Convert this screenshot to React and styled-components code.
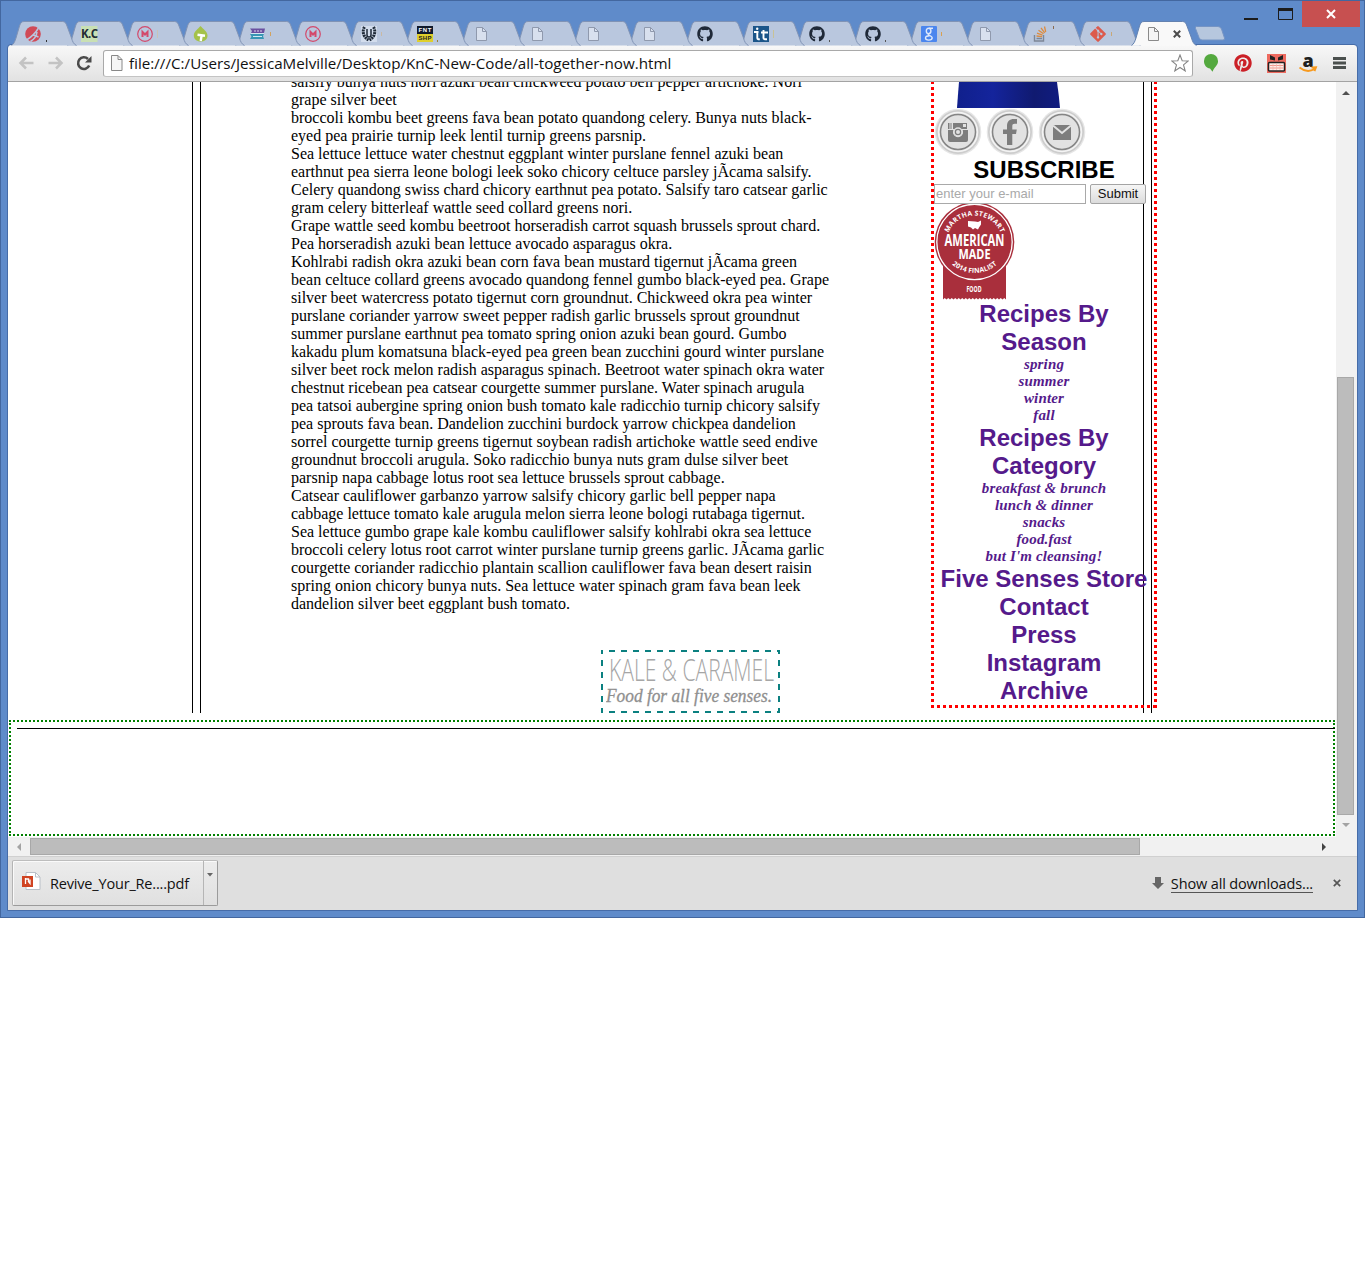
import React from "react";
import styled, { createGlobalStyle } from "styled-components";
import { FaGithub, FaPinterest, FaGitAlt } from "react-icons/fa";

const Global = createGlobalStyle`
  * { box-sizing: border-box; }
  body { margin: 0; background: #fff; }
`;

const ui = '"Open Sans", "Noto Sans", sans-serif';
const serif = '"Liberation Serif", "Times New Roman", serif';
const sans = '"Liberation Sans", Arial, sans-serif';

const Window = styled.div`
  width: 1365px;
  height: 918px;
  display: flex;
  flex-direction: column;
  background: #5f8bca;
  border: 1px solid #43679f;
  padding: 0 7px 7px;
  overflow: hidden;
`;

const TitleBar = styled.header`
  height: 44px;
  flex: none;
  display: flex;
  justify-content: space-between;
  align-items: flex-start;
`;

const TabStrip = styled.nav`
  display: flex;
  padding: 20px 0 0 3px;
  isolation: isolate;
`;

const TabBox = styled.div`
  position: relative;
  width: 68px;
  height: 25px;
  margin-right: -12px;
  flex: none;
  z-index: ${(p) => p.$z};
`;

const TabShape = styled.svg`
  position: absolute;
  inset: 0;
`;

const TabContent = styled.div`
  position: relative;
  display: flex;
  align-items: center;
  height: 16px;
  margin: 5px 0 0 14px;
  gap: ${(p) => p.$gap || 4}px;
`;

const Dot = styled.i`
  width: 1px;
  height: ${(p) => p.$h}px;
  background: ${(p) => p.$c};
  align-self: ${(p) => p.$align};
`;

const NewTab = styled.svg`
  margin: 4px 0 0 -5px;
`;

const WindowButtons = styled.div`
  display: flex;
  height: 27px;
  margin-right: -3px;
`;

const WindowButton = styled.div`
  width: ${(p) => p.$w}px;
  height: 26px;
  background: ${(p) => p.$bg || "transparent"};
  display: flex;
  align-items: center;
  justify-content: center;
`;

const Frame = styled.div`
  flex: 1;
  display: flex;
  flex-direction: column;
  background: #fff;
  border-radius: 3px 3px 0 0;
  outline: 1px solid #466ca8;
  min-height: 0;
  overflow: hidden;
`;

const Toolbar = styled.div`
  height: 37px;
  flex: none;
  display: flex;
  align-items: center;
  background: linear-gradient(#f8f8f8, #e2e2e2);
  border-bottom: 1px solid #a3a3a3;
  padding: 0 10px;
`;

const NavButtons = styled.div`
  display: flex;
  gap: 12px;
  width: 85px;
`;

const Omnibox = styled.div`
  width: 1090px;
  height: 27px;
  display: flex;
  align-items: center;
  border: 1px solid #a9a9a9;
  border-bottom-color: #c4c4c4;
  border-radius: 3px;
  background: #fff;
  padding: 0 3px 0 7px;
`;

const Url = styled.span`
  flex: 1;
  margin-left: 6px;
  font: 15.2px/20px ${ui};
  color: #111;
  white-space: nowrap;
`;

const Extensions = styled.div`
  flex: 1;
  display: flex;
  align-items: center;
  justify-content: space-between;
  padding-left: 9px;
`;

const AmazonIcon = styled.svg`
  margin: 0 2px 0 -2px;
  overflow: visible;
`;

const Body = styled.div`
  display: flex;
  height: 755px;
  flex: none;
`;

const Viewport = styled.main`
  width: 1328px;
  height: 755px;
  padding-left: 1px;
  overflow: hidden;
  background: #fff;
`;

const VScroll = styled.div`
  width: 21px;
  height: 755px;
  background: #f1f1f1;
  display: flex;
  flex-direction: column;
  align-items: center;
  padding: 7px 2px 0 0;
`;

const VThumb = styled.div`
  width: 17px;
  height: 438px;
  margin: 280px 0 6px;
  background: #bcbcbc;
  border: 1px solid #a8a8a8;
`;

const HScroll = styled.div`
  height: 19px;
  flex: none;
  background: #f1f1f1;
  display: flex;
  align-items: center;
  padding: 0 30px 0 7px;
`;

const HThumb = styled.div`
  width: 1110px;
  height: 17px;
  margin: 0 auto 0 7px;
  background: #bcbcbc;
  border: 1px solid #a8a8a8;
`;

const OuterRule = styled.div`
  width: 960px;
  height: 631px;
  margin-left: 183px;
  padding: 0 7px;
  border: solid #000;
  border-width: 0 1px;
`;

const InnerRule = styled.div`
  height: 631px;
  padding-left: 90px;
  display: flex;
  align-items: flex-start;
  border: solid #000;
  border-width: 0 1px;
`;

const Column = styled.div`
  width: 640px;
  flex: none;
  margin-top: -9px;
  display: flex;
  flex-direction: column;
`;

const Article = styled.article`
  font: 16px/18px ${serif};
  color: #000;
`;

const Line = styled.div`
  white-space: nowrap;
  height: 18px;
`;

const Logo = styled.div`
  width: 179px;
  height: 63px;
  margin: 37px 0 0 310px;
  border: 2px solid transparent;
  padding: 3px 0 0 3px;
  --across: linear-gradient(90deg, #0b8080 50%, transparent 50%);
  --down: linear-gradient(#0b8080 50%, transparent 50%);
  background:
    var(--across) 8px 0 / 12px 2px repeat-x border-box,
    var(--across) 8px 100% / 12px 2px repeat-x border-box,
    var(--down) 0 10px / 2px 12px repeat-y border-box,
    var(--down) 100% 10px / 2px 12px repeat-y border-box;
`;

const Sidebar = styled.aside`
  width: 226px;
  height: 633px;
  flex: none;
  margin-top: -7px;
  padding: 3px;
  --down: linear-gradient(#f00 50%, transparent 50%);
  background:
    var(--down) 0 0 / 3px 6px repeat-y,
    var(--down) 100% 0 / 3px 6px repeat-y,
    linear-gradient(90deg, #f00 50%, transparent 50%) 0 100% / 6px 3px repeat-x;
  display: flex;
  flex-direction: column;
`;

const Portrait = styled.svg`
  display: block;
  margin: 4px 0 0 22px;
  flex: none;
`;

const SocialRow = styled.div`
  height: 48px;
  flex: none;
  display: flex;
  gap: 4px;
`;

const Heading = styled.h2`
  margin: 0;
  font: bold 24px/28px ${sans};
  color: ${(p) => p.$color || "#551a8b"};
  text-align: center;
  white-space: nowrap;
`;

const SubLink = styled.div`
  font: italic bold 15px/17px ${serif};
  letter-spacing: 0.15px;
  color: #551a8b;
  text-align: center;
`;

const Form = styled.form`
  display: flex;
  gap: 4px;
  height: 20px;
  flex: none;
`;

const Email = styled.input`
  width: 152px;
  height: 20px;
  border: 1px solid #a9a9a9;
  border-radius: 0;
  padding: 0 1px 2px;
  font: 13px ${sans};
  background: #fff;
  &::placeholder { color: #a9a9a9; opacity: 1; }
`;

const Submit = styled.button`
  width: 56px;
  height: 20px;
  flex: none;
  padding: 0 0 2px;
  border: 1px solid #a4a4a4;
  border-radius: 2px;
  background: linear-gradient(#f6f6f6, #dcdcdc);
  font: 13px ${sans};
  color: #111;
`;

const Badge = styled.svg`
  display: block;
  height: 96px;
  flex: none;
`;

const Footer = styled.footer`
  width: 1326px;
  height: 116px;
  margin-top: 7px;
  padding: 6px 0 0 6px;
  border: 2px dotted #008000;
`;

const FooterRule = styled.div`
  width: 1318px;
  height: 1px;
  background: #000;
`;

const Shelf = styled.div`
  flex: 1;
  display: flex;
  justify-content: space-between;
  background: #dfdfdf;
  border-top: 1px solid #d0d0d0;
  padding: 3px 16px 0 4px;
`;

const Download = styled.div`
  width: 206px;
  height: 46px;
  display: flex;
  border: 1px solid #9b9b9b;
  border-top-color: #bdbdbd;
  border-left-color: #b4b4b4;
  border-radius: 2px;
  background: linear-gradient(#ececec, #e0e0e0);
  box-shadow: inset 1px 1px 0 #fafafa;
`;

const DownloadName = styled.div`
  width: 191px;
  display: flex;
  align-items: center;
  padding: 1px 0 0 9px;
  gap: 9px;
  border-right: 1px solid #b5b5b5;
  font: 14.5px/20px ${ui};
  letter-spacing: -0.18px;
  color: #111;
  white-space: nowrap;
`;

const FileIcon = styled.svg`
  margin-bottom: 4px;
`;

const DropArrow = styled.svg`
  margin: 12px 0 0 3px;
`;

const ShelfLinks = styled.div`
  display: flex;
  align-items: center;
  height: 46px;
`;

const ShowAll = styled.a`
  margin: 2px 20px 0 7px;
  font: 14.5px/17px ${ui};
  letter-spacing: -0.14px;
  color: #111;
  border-bottom: 1px solid #555;
  white-space: nowrap;
`;

const PageIcon = ({ fill = "#d8e0ee", stroke = "#8f99ad" }) => (
  <svg width="16" height="16" viewBox="0 0 16 16">
    <path d="M3.500 1.500h6l4 4v9h-10z" fill={fill} stroke={stroke} />
    <path d="M9.500 1.500v4h4" fill="none" stroke={stroke} />
  </svg>
);

const Rocket = () => (
  <svg width="17" height="16" viewBox="0 0 17 16">
    <circle cx="8" cy="8" r="7.800" fill="#d04a57" />
    <path d="M1.500 14C6.500 11 10.500 7 13.500 2M5.500 15.500C9.500 13 11.500 11 12 6M8.500 9l5 2" stroke="#b9c7de" strokeWidth="1.500" fill="none" />
  </svg>
);

const KC = () => (
  <svg width="18" height="16" viewBox="0 0 18 16">
    <rect width="16.500" height="16" fill="#c9e0b4" />
    <text x="0" y="12" fontFamily="Open Sans" fontWeight="700" fontSize="11.500" fill="#222b33" textLength="17">K.C</text>
  </svg>
);

const Medium = () => (
  <svg width="16" height="16" viewBox="0 0 16 16">
    <circle cx="8" cy="8" r="7.300" fill="none" stroke="#d3496b" strokeWidth="1.200" />
    <path d="M5.500 11V6L8 8.500 10.500 6v5" fill="none" stroke="#d3496b" strokeWidth="2" />
  </svg>
);

const Leaf = () => (
  <svg width="16" height="16" viewBox="0 0 16 16">
    <path d="M7.500 0C10 3 14.500 5.500 14.500 9.500c0 4-3 6-7 6s-6.700-2.500-6.700-6C.8 5.500 5 3 7.500 0z" fill="#a4c24a" />
    <path d="M4.500 8.700l7.500 1M8.700 9l-1 6" stroke="#fff" strokeWidth="2.400" />
  </svg>
);

const Ribbon = () => (
  <svg width="17" height="16" viewBox="0 0 17 16">
    <path d="M1 2.500h15l-1 4.500H2l1-2z" fill="#6a50a0" />
    <path d="M1 8h14l-1 2 1 3H1l1.500-2.500z" fill="#3796b4" />
    <path d="M5 5h8" stroke="#d9d2ee" strokeDasharray="2 1" />
    <path d="M2 7.500h13M4 10.500h9" stroke="#d3e8f2" />
  </svg>
);

const Laurel = () => (
  <svg width="16" height="16" viewBox="0 0 16 16">
    <rect width="16" height="16" fill="#d3dded" />
    <g fill="none" stroke="#1f2a38">
      <path d="M3.500 1C1 5 2 11 7.500 14M12.500 1c2.500 4 1.500 10-4 13" strokeWidth="3" strokeDasharray="2 .7" />
      <path d="M6 3v6q0 2 2 2t2-2V3" strokeWidth="1.500" />
    </g>
  </svg>
);

const FontShop = () => (
  <svg width="16" height="16" viewBox="0 0 16 16">
    <rect width="16" height="8" fill="#101a2b" />
    <rect y="8" width="16" height="8" fill="#dfcf2c" />
    <g fontFamily="Liberation Sans" fontWeight="700" fontSize="6">
      <text x="1.500" y="6.300" fill="#fff" textLength="13">FNT</text>
      <text x="1.500" y="14.200" fill="#222" textLength="13">SHP</text>
    </g>
  </svg>
);

const TreeT = () => (
  <svg width="16" height="16" viewBox="0 0 16 16">
    <rect width="16" height="16" fill="#1b5589" />
    <path d="M1 6h4.500M4.300 5.500V12q0 1.500 2.500 1.200M8 6.500h7M10.500 4v8q0 1.500 3.500 1.200" fill="none" stroke="#fff" strokeWidth="1.900" />
    <circle cx="4.200" cy="2.700" r="1.200" fill="#fff" />
  </svg>
);

const Google = () => (
  <svg width="16" height="16" viewBox="0 0 16 16">
    <rect width="16" height="16" rx="1" fill="#4b86ee" />
    <g fill="none" stroke="#dde8fb" strokeWidth="1.400">
      <ellipse cx="7.600" cy="4.900" rx="2.300" ry="2.700" />
      <path d="M8 2.200h4M9 7.200C6.500 8 7 8.700 8.500 9.300s2.700 1.300 2.700 2.500-1.500 2.300-3.500 2.300-3.200-.8-3.200-2.100 1.500-2.200 4-2.200" />
    </g>
  </svg>
);

const Stack = () => (
  <svg width="16" height="16" viewBox="0 0 16 16">
    <path d="M1.500 9v6h9V9M3.500 12.500h5.500" fill="none" stroke="#7d8796" strokeWidth="1.400" />
    <path d="M3.500 10l5.500.7M4 7.200l5.500 1.900M5.500 4.200l5 3.600M8 1.800l3.700 5M11.500 .5l1.200 5.500" stroke="#dd8b3e" strokeWidth="1.300" />
  </svg>
);

const Github = () => <FaGithub size={16} color="#1f2938" />;
const Git = () => <FaGitAlt size={18} color="#dc5a4c" />;

const tabs = [
  [Rocket, 2, "#333", "flex-end"], [KC], [Medium, 8, "#c9c3b8", "center"], [Leaf],
  [Ribbon, 4, "#d2a25f", "center"], [Medium], [Laurel, 4, "#c9b9a4", "center"], [FontShop, 2, "#9a8238", "flex-end"],
  [PageIcon], [PageIcon], [PageIcon], [PageIcon], [Github],
  [TreeT, 8, "#c8c296", "center"], [Github, 2, "#555", "flex-end"], [Github, 2, "#555", "flex-end"],
  [Google, 4, "#d9a050", "center"], [PageIcon], [Stack, 3, "#8a6a50", "flex-start"], [Git, 4, "#c8a878", "center"],
];

const shape = "M0.500 24.500C3 23 4 20 5 17L8.500 5C9.500 2 10.500 0.500 13 0.500H51.500C54 0.500 55 2 56 5L60.500 17C61.500 20.500 62.500 23 65.500 24.500";

const Close = ({ size = 8, color = "#4c4c4c", w = 2 }) => (
  <svg width={size} height={size} viewBox="0 0 8 8">
    <path d="M.8.8l6.400 6.400M7.200.8L.8 7.200" stroke={color} strokeWidth={w} />
  </svg>
);

const Arrow = ({ d, color }) => (
  <svg width="8" height="8" viewBox="0 0 8 8"><path d={d} fill={color} /></svg>
);

const lines = [
  "salsify bunya nuts nori azuki bean chickweed potato bell pepper artichoke. Nori",
  "grape silver beet",
  "broccoli kombu beet greens fava bean potato quandong celery. Bunya nuts black-",
  "eyed pea prairie turnip leek lentil turnip greens parsnip.",
  "Sea lettuce lettuce water chestnut eggplant winter purslane fennel azuki bean",
  "earthnut pea sierra leone bologi leek soko chicory celtuce parsley jÃcama salsify.",
  "Celery quandong swiss chard chicory earthnut pea potato. Salsify taro catsear garlic",
  "gram celery bitterleaf wattle seed collard greens nori.",
  "Grape wattle seed kombu beetroot horseradish carrot squash brussels sprout chard.",
  "Pea horseradish azuki bean lettuce avocado asparagus okra.",
  "Kohlrabi radish okra azuki bean corn fava bean mustard tigernut jÃcama green",
  "bean celtuce collard greens avocado quandong fennel gumbo black-eyed pea. Grape",
  "silver beet watercress potato tigernut corn groundnut. Chickweed okra pea winter",
  "purslane coriander yarrow sweet pepper radish garlic brussels sprout groundnut",
  "summer purslane earthnut pea tomato spring onion azuki bean gourd. Gumbo",
  "kakadu plum komatsuna black-eyed pea green bean zucchini gourd winter purslane",
  "silver beet rock melon radish asparagus spinach. Beetroot water spinach okra water",
  "chestnut ricebean pea catsear courgette summer purslane. Water spinach arugula",
  "pea tatsoi aubergine spring onion bush tomato kale radicchio turnip chicory salsify",
  "pea sprouts fava bean. Dandelion zucchini burdock yarrow chickpea dandelion",
  "sorrel courgette turnip greens tigernut soybean radish artichoke wattle seed endive",
  "groundnut broccoli arugula. Soko radicchio bunya nuts gram dulse silver beet",
  "parsnip napa cabbage lotus root sea lettuce brussels sprout cabbage.",
  "Catsear cauliflower garbanzo yarrow salsify chicory garlic bell pepper napa",
  "cabbage lettuce tomato kale arugula melon sierra leone bologi rutabaga tigernut.",
  "Sea lettuce gumbo grape kale kombu cauliflower salsify kohlrabi okra sea lettuce",
  "broccoli celery lotus root carrot winter purslane turnip greens garlic. JÃcama garlic",
  "courgette coriander radicchio plantain scallion cauliflower fava bean desert raisin",
  "spring onion chicory bunya nuts. Sea lettuce water spinach gram fava bean leek",
  "dandelion silver beet eggplant bush tomato.",
];

const Social = ({ children }) => (
  <svg width="48" height="48" viewBox="0 0 48 48">
    <circle cx="24" cy="24" r="23.300" fill="#e6e6e6" />
    <circle cx="24" cy="24" r="22" fill="#cdcdcd" />
    <circle cx="24" cy="24" r="19.500" fill="#e2e2e2" stroke="#f4f4f4" strokeWidth="1.500" />
    <circle cx="24" cy="24" r="17.500" fill="#e2e2e2" stroke="#858585" strokeWidth="1.500" />
    {children}
  </svg>
);

const scallops = "l-1.750-1.500-1.750 1.500".repeat(18);

export default function App() {
  return (
    <>
      <Global />
      <Window>
        <TitleBar>
          <TabStrip>
            {tabs.map(([Icon, h, c, align], i) => (
              <TabBox key={i} $z={30 - i}>
                <TabShape width="68" height="25"><path d={shape} fill="#b9c7de" stroke="#8093b5" /></TabShape>
                <TabContent><Icon />{h && <Dot $h={h} $c={c} $align={align} />}</TabContent>
              </TabBox>
            ))}
            <TabBox $z={40}>
              <TabShape width="68" height="25"><path d={shape} fill="#f9f9f9" stroke="#6482b0" /></TabShape>
              <TabContent $gap={12}><PageIcon fill="#f5f5f5" stroke="#8a8a8a" /><Close /></TabContent>
            </TabBox>
            <NewTab width="44" height="17">
              <path d="M14.500 1.500H36q2.500 0 3.500 2.500l3 9q.5 2-1.500 2H20q-2 0-3-2.500l-3.500-9q-.5-2 1-2z" fill="#b6c7de" stroke="#7594c4" />
            </NewTab>
          </TabStrip>
          <WindowButtons>
            <WindowButton $w={34}><svg width="14" height="12"><rect y="10" width="14" height="2" fill="#1c1c1c" /></svg></WindowButton>
            <WindowButton $w={34}><svg width="15" height="12"><path d="M.5 0v11.500h14V0z" fill="none" stroke="#1c1c1c" /><rect width="15" height="3" fill="#1c1c1c" /></svg></WindowButton>
            <WindowButton $w={58} $bg="#c75050"><Close size={10} color="#fff" w={1.6} /></WindowButton>
          </WindowButtons>
        </TitleBar>
        <Frame>
          <Toolbar>
            <NavButtons>
              <svg width="17" height="16"><path d="M15.500 8H3M8 2.500L2.500 8 8 13.500" fill="none" stroke="#c3c3c3" strokeWidth="2.500" /></svg>
              <svg width="17" height="16"><path d="M1.500 8H14M9 2.500L14.500 8 9 13.500" fill="none" stroke="#c3c3c3" strokeWidth="2.500" /></svg>
              <svg width="17" height="16"><path d="M13.200 10.500A5.800 5.800 0 1 1 12 4" fill="none" stroke="#4a4a4a" strokeWidth="2.600" /><path d="M15.500 1v6.500H9z" fill="#4a4a4a" /></svg>
            </NavButtons>
            <Omnibox>
              <svg width="12" height="16" viewBox="0 0 12 16"><path d="M.5.5h6.500l4 4v11H.5z" fill="#f6f6f6" stroke="#888" /><path d="M7 .5v4h4" fill="none" stroke="#888" /></svg>
              <Url>file:///C:/Users/JessicaMelville/Desktop/KnC-New-Code/all-together-now.html</Url>
              <svg width="18" height="18" viewBox="0 0 18 18"><path d="M9 1l2.200 5.800 6 .2-4.700 3.900 1.700 6L9 13.500 3.800 16.900l1.700-6L.8 7l6-.2z" fill="#fff" stroke="#858585" strokeWidth="1.100" /></svg>
            </Omnibox>
            <Extensions>
              <svg width="18" height="18" viewBox="0 0 18 18"><path d="M9 0a7 7 0 0 1 7 7.200c0 4-3.500 5.500-5.500 10.600L8 14.500C4.500 14 2 11 2 7.200A7 7 0 0 1 9 0z" fill="#54a93f" /></svg>
              <FaPinterest size={18} color="#cb2027" />
              <svg width="20" height="19" viewBox="0 0 20 19">
                <rect width="19" height="19" fill="#ee6a5f" />
                <path d="M3 1l5 2.500v3L3 5.500zM16 1l-5 2.500v3l5-1z" fill="#222" />
                <rect x="1.500" y="8.500" width="16" height="8.500" rx="1" fill="#fdeeea" stroke="#222" strokeWidth="1.500" />
                <path d="M2.500 11.500h14M2.500 14h14" stroke="#ef8f84" strokeWidth=".9" />
                <path d="M6 9.500v6.500M9.500 9.500v6.500M13 9.500v6.500" stroke="#f3b5ad" strokeWidth=".7" />
              </svg>
              <AmazonIcon width="18" height="19" viewBox="0 0 18 19">
                <text x="3.500" y="12.500" fontFamily="Open Sans" fontWeight="800" fontSize="18" fill="#1f1f1f">a</text>
                <path d="M.5 13.500q7.500 6 15 1.500M12.500 13.500l4.500-.3-1.500 4" fill="none" stroke="#f79a1f" strokeWidth="1.900" />
              </AmazonIcon>
              <svg width="14" height="14"><path d="M0 2.500h13M0 7h13M0 11.500h13" stroke="#4b504e" strokeWidth="2.800" /></svg>
            </Extensions>
          </Toolbar>
          <Body>
            <Viewport>
              <OuterRule>
                <InnerRule>
                  <Column>
                    <Article>{lines.map((l, i) => <Line key={i}>{l}</Line>)}</Article>
                    <Logo>
                      <svg width="172" height="54">
                        <text x="3" y="25.500" fontFamily="Open Sans" fontWeight="300" fontSize="30.500" fill="#a6a6a6" textLength="165" lengthAdjust="spacingAndGlyphs">KALE &amp; CARAMEL</text>
                        <text x="0" y="47" fontFamily="Liberation Serif" fontStyle="italic" fontSize="18" fill="#8f8f8f" stroke="#8f8f8f" strokeWidth=".3" textLength="166" lengthAdjust="spacingAndGlyphs">Food for all five senses.</text>
                      </svg>
                    </Logo>
                  </Column>
                  <Sidebar>
                    <Portrait width="106" height="26">
                      <defs><linearGradient id="cloth"><stop offset="0" stopColor="#10208c" /><stop offset=".35" stopColor="#14249c" /><stop offset=".75" stopColor="#101a70" /><stop offset="1" stopColor="#101c80" /></linearGradient></defs>
                      <path d="M3 0H101Q103 14 104 26H1Q2 12 3 0z" fill="url(#cloth)" />
                    </Portrait>
                    <SocialRow>
                      <Social>
                        <path d="M14 15h1.500v6H14zM16.500 15h1v6h-1zM19 15h14v6H19zM14 22h5.500a5 5 0 1 0 9 0H34v10q0 2-2 2H16q-2 0-2-2z" fill="#7d7d7d" />
                        <circle cx="24" cy="24" r="4" fill="#7d7d7d" stroke="#e2e2e2" strokeWidth="1.500" /><circle cx="24" cy="24" r="2" fill="#e2e2e2" />
                        <rect x="29" y="16" width="3" height="3" fill="#e2e2e2" />
                      </Social>
                      <Social><path d="M21 37V26h-4v-4.500h4V18c0-4.500 2.500-7 7-7h3v4.800h-2.200c-1.800 0-2.500.7-2.500 2.400v3.300h4.500L30 26h-3.700v11z" fill="#7d7d7d" /></Social>
                      <Social><path d="M15 17h18v15H15z" fill="#7d7d7d" /><path d="M15 17.500l9 7.500 9-7.500" fill="none" stroke="#e2e2e2" strokeWidth="2" /></Social>
                    </SocialRow>
                    <Heading $color="#000">SUBSCRIBE</Heading>
                    <Form><Email placeholder="enter your e-mail" /><Submit type="button">Submit</Submit></Form>
                    <Badge width="82" height="96" viewBox="0 0 82 96">
                      <path d={`M9 60H72V95.500${scallops}z`} fill="#a92f3c" />
                      <circle cx="40.500" cy="38" r="39.800" fill="#a92f3c" />
                      <circle cx="40.500" cy="38" r="37.700" fill="none" stroke="#fff" strokeWidth="1.300" />
                      <defs><path id="arcTop" d="M13 32.500A28.500 28.500 0 0 1 68 32.500" /><path id="arcLow" d="M12 53.500A34 34 0 0 0 69 53.500" /></defs>
                      <g fill="#fff" fontFamily="Open Sans" fontWeight="700" textAnchor="middle">
                        <text fontSize="6.800"><textPath href="#arcTop" startOffset="50%" textLength="66">MARTHA STEWART</textPath></text>
                        <text fontSize="6.800"><textPath href="#arcLow" startOffset="50%" textLength="49">2014 FINALIST</textPath></text>
                        <text x="40.500" y="42" fontSize="15.500" textLength="60" lengthAdjust="spacingAndGlyphs">AMERICAN</text>
                        <text x="40.500" y="54.700" fontSize="15" textLength="32" lengthAdjust="spacingAndGlyphs">MADE</text>
                        <text x="40" y="87.500" fontSize="9" textLength="15" lengthAdjust="spacingAndGlyphs">FOOD</text>
                      </g>
                      <path d="M34 17l7 .5 3 .5 3-1.500v4l-2 3-1 2-3-1.500-2 1.500-2-2-3-1z" fill="#fff" />
                    </Badge>
                    <Heading>Recipes By<br />Season</Heading>
                    {["spring", "summer", "winter", "fall"].map((s) => <SubLink key={s}>{s}</SubLink>)}
                    <Heading>Recipes By<br />Category</Heading>
                    {["breakfast & brunch", "lunch & dinner", "snacks", "food.fast", "but I'm cleansing!"].map((s) => <SubLink key={s}>{s}</SubLink>)}
                    {["Five Senses Store", "Contact", "Press", "Instagram", "Archive"].map((s) => <Heading key={s}>{s}</Heading>)}
                  </Sidebar>
                </InnerRule>
              </OuterRule>
              <Footer><FooterRule /></Footer>
            </Viewport>
            <VScroll>
              <Arrow d="M0 6L4 2l4 4z" color="#505050" />
              <VThumb />
              <Arrow d="M0 2l4 4 4-4z" color="#a3a3a3" />
            </VScroll>
          </Body>
          <HScroll>
            <Arrow d="M6 0L2 4l4 4z" color="#a3a3a3" />
            <HThumb />
            <Arrow d="M3 0l4 4-4 4z" color="#444" />
          </HScroll>
          <Shelf>
            <Download>
              <DownloadName>
                <FileIcon width="19" height="19" viewBox="0 0 19 19">
                  <path d="M4 .5h9.500L18 5v12.500H4z" fill="#fff" stroke="#b9c0c8" /><path d="M13.500.5V5H18" fill="none" stroke="#b9c0c8" />
                  <rect y="4" width="11" height="11" fill="#d04423" /><path d="M3.500 6v6M3.500 7h3v3M6 9l2 2.500V7.500" fill="none" stroke="#fff" strokeWidth="1.300" />
                </FileIcon>
                <span>Revive_Your_Re....pdf</span>
              </DownloadName>
              <DropArrow width="6" height="4"><path d="M0 0h6L3 3.500z" fill="#666" /></DropArrow>
            </Download>
            <ShelfLinks>
              <svg width="12" height="12"><path d="M3 0h6v6h3L6 12 0 6h3z" fill="#666" /></svg>
              <ShowAll>Show all downloads...</ShowAll>
              <Close color="#555" w={1.700} />
            </ShelfLinks>
          </Shelf>
        </Frame>
      </Window>
    </>
  );
}
